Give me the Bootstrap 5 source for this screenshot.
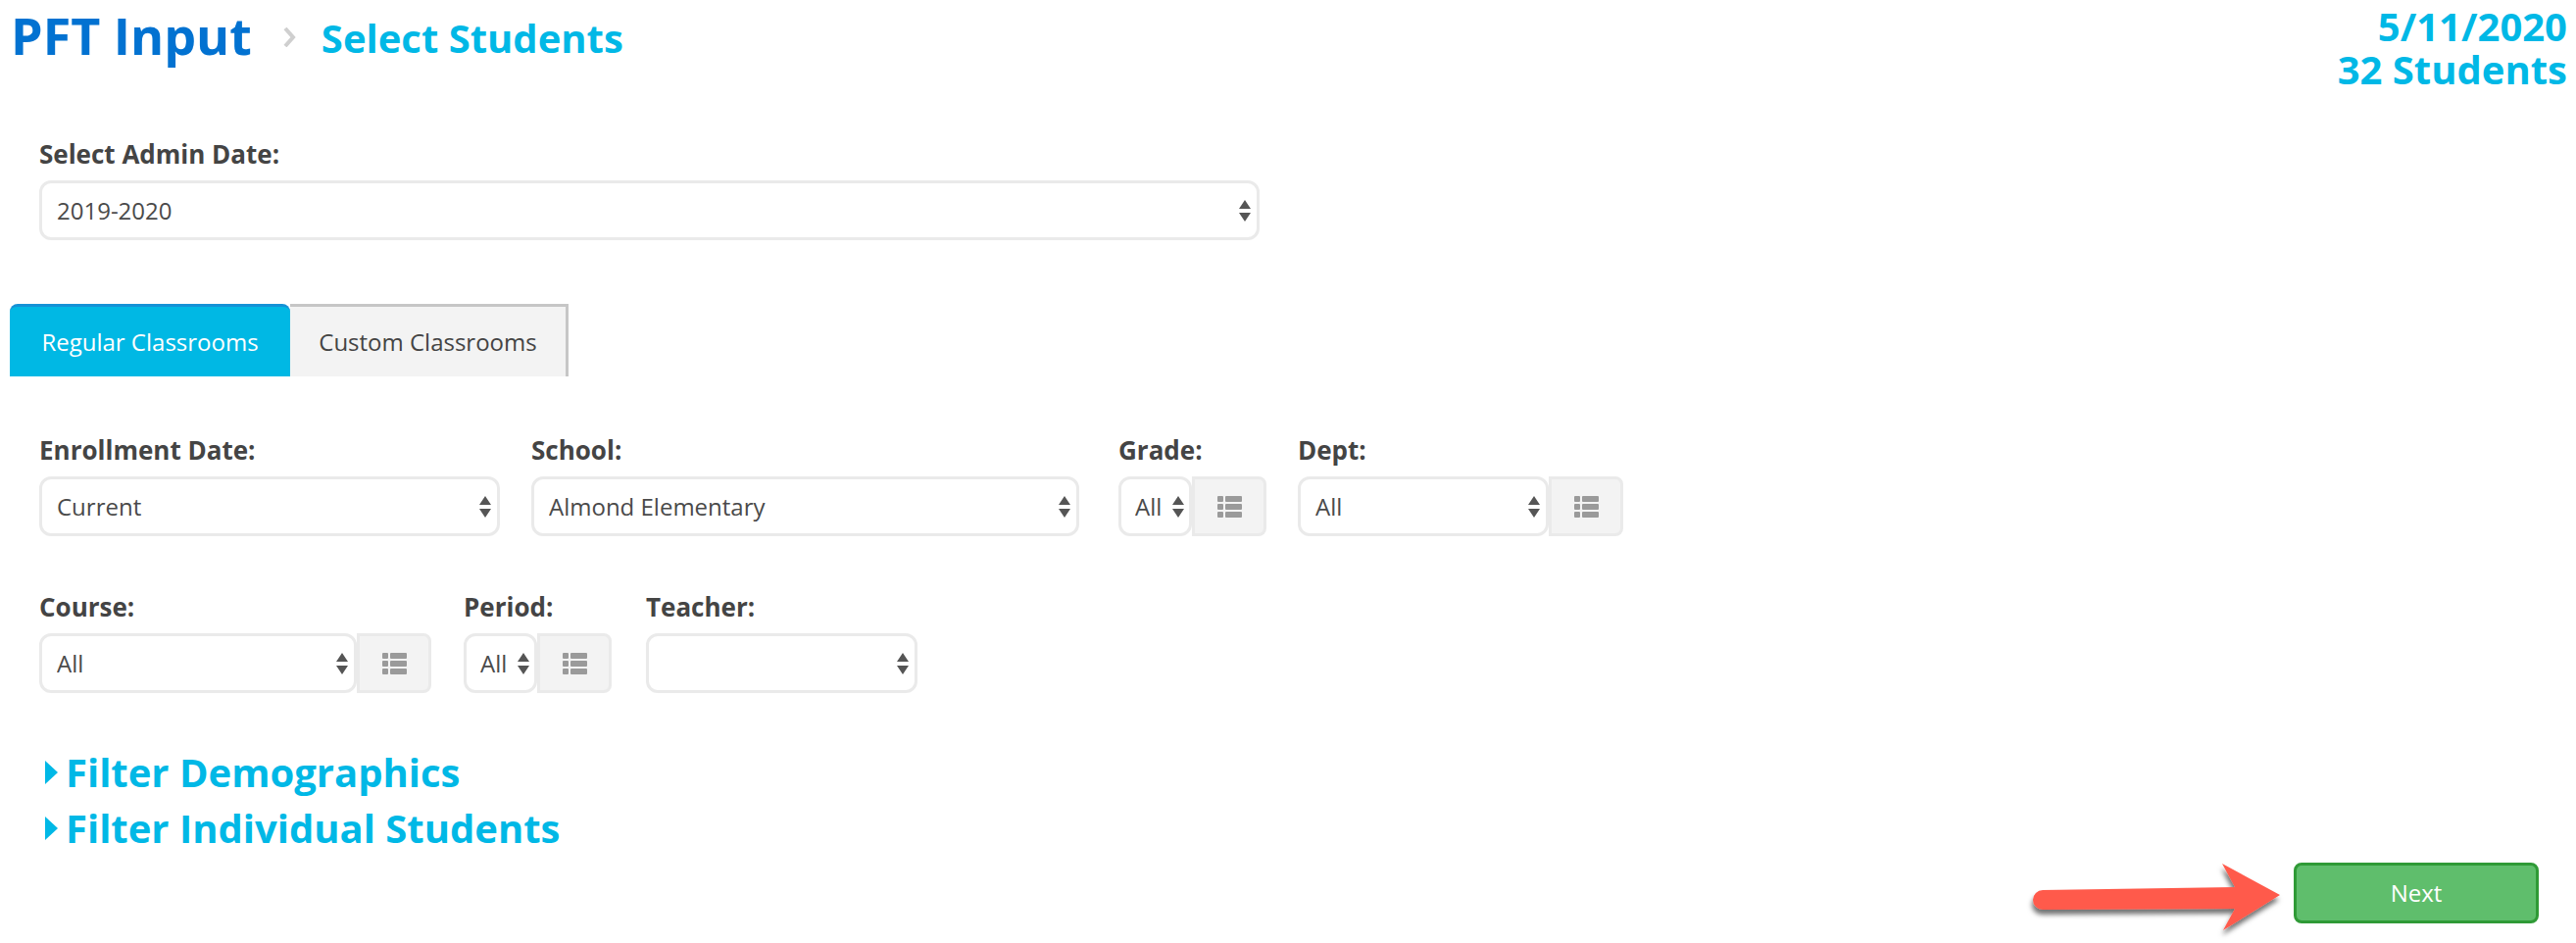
<!DOCTYPE html>
<html lang="en">
<head>
<meta charset="utf-8">
<title>PFT Input</title>
<link rel="stylesheet" href="https://cdn.jsdelivr.net/npm/bootstrap@5.3.0/dist/css/bootstrap.min.css">
<style>
html,body{height:100%}
body{font-family:"Open Sans",sans-serif;color:#444;font-size:24px;background:#fff;overflow:hidden}
.page{position:relative;height:962px;padding:0 9px 0 10px}
.top-bar{height:88px}
.pft-title{font-size:52px;font-weight:700;color:#0272d1;line-height:72px;margin:0 0 0 1px}
.pft-sub{font-size:40px;font-weight:700;color:#00b8e6;line-height:52px;margin:0 0 0 25px;position:relative;top:3px}
.crumb{width:14px;height:20px;margin-left:32px;position:relative;top:2px}
.pft-right{font-size:40px;font-weight:700;color:#00b8e6;line-height:44px;margin-top:5px}
.lbl{font-weight:700;font-size:26px;color:#444;line-height:34px;margin-bottom:10px;display:block;white-space:nowrap}
.sel{height:61px;border:3px solid #eaeaea;border-radius:12px;font-size:24px;color:#4a4a4a;padding:0 34px 0 15px;box-shadow:none;
background-image:url("data:image/svg+xml,%3Csvg xmlns='http://www.w3.org/2000/svg' width='12' height='22' viewBox='0 0 12 22'%3E%3Cpath fill='%23555' d='M6 0l6 9H0zM6 22L0 13h12z'/%3E%3C/svg%3E");
background-size:12px 22px;background-position:right 6px center;background-repeat:no-repeat;font-family:inherit}
.sel:focus{border-color:#eaeaea;box-shadow:none}
.admin-block{margin:52px 0 0 30px;width:1245px}
.tabs-row{margin-top:65px;height:74px}
.tab-btn{height:74px;font-size:24px;display:flex;align-items:center;justify-content:center}
.tab-on{width:286px;background:#00b8e4;color:#fff;border-top:3px solid #1592d6;border-radius:8px 8px 0 0}
.tab-off{width:284px;background:#f3f3f3;color:#444;border:3px solid #c6c6c6;border-bottom:0;border-left:0}
.filter-row{display:flex;margin-left:30px}
.row-a{margin-top:58px}
.row-b{margin-top:55px}
.fld{flex:none}
.addon{width:76px;height:61px;background:#f3f3f3;border:3px solid #eaeaea;border-radius:0 8px 8px 0;padding:0;display:flex;align-items:center;justify-content:center}
.addon svg{width:25px;height:22px}
.w-enroll{width:470px}.w-school{width:559px}
.w-grade{width:75px}.w-dept{width:256px}.w-course{width:324px}.w-period{width:75px}.w-teacher{width:277px}
.w-grade.sel,.w-period.sel{padding:0 20px 0 14px;background-position:right 5px center}
.filter-link{display:flex;align-items:center;color:#00b8e6;font-size:40px;font-weight:700;line-height:57px;text-decoration:none;margin-left:36px}
.filter-link svg{width:13px;height:24px;margin-right:8px;flex:none}
.links{margin-top:52px}
.next-wrap{position:absolute;right:38px;top:880px}
.next-btn{width:250px;height:62px;background:#5fbe6c;border:3px solid #2f9a36;color:#fff;font-size:24px;border-radius:8px;display:flex;align-items:center;justify-content:center;padding:0}
.next-btn:hover{background:#5fbe6c;border-color:#2f9a36;color:#fff}
.callout{position:absolute;left:2064px;top:870px;width:280px;height:92px;overflow:visible}
.gap-school{margin-left:32px}.gap-grade{margin-left:40px}.gap-dept{margin-left:32px}
.gap-period{margin-left:33px}.gap-teacher{margin-left:35px}
</style>
</head>
<body>
<div class="page">
  <div class="top-bar d-flex justify-content-between align-items-start">
    <div class="d-flex align-items-center">
      <h1 class="pft-title">PFT Input</h1>
      <svg class="crumb" viewBox="0 0 14 20"><path d="M2 1l8 9-8 9" fill="none" stroke="#cfcfcf" stroke-width="4"/></svg>
      <h2 class="pft-sub">Select Students</h2>
    </div>
    <div class="pft-right text-end">5/11/2020<br>32 Students</div>
  </div>

  <div class="admin-block">
    <label class="lbl">Select Admin Date:</label>
    <select class="form-select sel"><option>2019-2020</option></select>
  </div>

  <div class="tabs-row d-flex">
    <div class="tab-btn tab-on">Regular Classrooms</div>
    <div class="tab-btn tab-off">Custom Classrooms</div>
  </div>

  <div class="filter-row row-a">
    <div class="fld w-enroll"><label class="lbl">Enrollment Date:</label><select class="form-select sel"><option>Current</option></select></div>
    <div class="fld w-school gap-school"><label class="lbl">School:</label><select class="form-select sel"><option>Almond Elementary</option></select></div>
    <div class="fld gap-grade"><label class="lbl">Grade:</label><div class="d-flex"><select class="form-select sel w-grade"><option>All</option></select><button class="addon" type="button" aria-label="List"><svg viewBox="0 0 25 22"><g fill="#9a9a9a"><rect x="0" y="0" width="6" height="6" rx="1"/><rect x="8" y="0" width="17" height="6" rx="1"/><rect x="0" y="8" width="6" height="6" rx="1"/><rect x="8" y="8" width="17" height="6" rx="1"/><rect x="0" y="16" width="6" height="6" rx="1"/><rect x="8" y="16" width="17" height="6" rx="1"/></g></svg></button></div></div>
    <div class="fld gap-dept"><label class="lbl">Dept:</label><div class="d-flex"><select class="form-select sel w-dept"><option>All</option></select><button class="addon" type="button" aria-label="List"><svg viewBox="0 0 25 22"><g fill="#9a9a9a"><rect x="0" y="0" width="6" height="6" rx="1"/><rect x="8" y="0" width="17" height="6" rx="1"/><rect x="0" y="8" width="6" height="6" rx="1"/><rect x="8" y="8" width="17" height="6" rx="1"/><rect x="0" y="16" width="6" height="6" rx="1"/><rect x="8" y="16" width="17" height="6" rx="1"/></g></svg></button></div></div>
  </div>

  <div class="filter-row row-b">
    <div class="fld"><label class="lbl">Course:</label><div class="d-flex"><select class="form-select sel w-course"><option>All</option></select><button class="addon" type="button" aria-label="List"><svg viewBox="0 0 25 22"><g fill="#9a9a9a"><rect x="0" y="0" width="6" height="6" rx="1"/><rect x="8" y="0" width="17" height="6" rx="1"/><rect x="0" y="8" width="6" height="6" rx="1"/><rect x="8" y="8" width="17" height="6" rx="1"/><rect x="0" y="16" width="6" height="6" rx="1"/><rect x="8" y="16" width="17" height="6" rx="1"/></g></svg></button></div></div>
    <div class="fld gap-period"><label class="lbl">Period:</label><div class="d-flex"><select class="form-select sel w-period"><option>All</option></select><button class="addon" type="button" aria-label="List"><svg viewBox="0 0 25 22"><g fill="#9a9a9a"><rect x="0" y="0" width="6" height="6" rx="1"/><rect x="8" y="0" width="17" height="6" rx="1"/><rect x="0" y="8" width="6" height="6" rx="1"/><rect x="8" y="8" width="17" height="6" rx="1"/><rect x="0" y="16" width="6" height="6" rx="1"/><rect x="8" y="16" width="17" height="6" rx="1"/></g></svg></button></div></div>
    <div class="fld gap-teacher w-teacher"><label class="lbl">Teacher:</label><select class="form-select sel"><option></option></select></div>
  </div>

  <div class="links">
    <a class="filter-link" href="#"><svg viewBox="0 0 13 24"><path fill="#00b8e6" d="M0 0l13 12L0 24z"/></svg>Filter Demographics</a>
    <a class="filter-link" href="#"><svg viewBox="0 0 13 24"><path fill="#00b8e6" d="M0 0l13 12L0 24z"/></svg>Filter Individual Students</a>
  </div>

  <div class="next-wrap"><button class="btn next-btn" type="button">Next</button></div>
  <svg class="callout" viewBox="0 0 280 92">
    <defs><filter id="sh" x="-10%" y="-30%" width="125%" height="170%"><feDropShadow dx="-1" dy="5" stdDeviation="2.5" flood-color="#000" flood-opacity=".55"/></filter></defs>
    <path filter="url(#sh)" fill="#ff5a4c" d="M20 38 L216 35 L203 11 L262 43 L204 79 L216 57 L20 58 A10 10 0 0 1 20 38Z"/>
  </svg>
</div>
<script src="https://cdn.jsdelivr.net/npm/bootstrap@5.3.0/dist/js/bootstrap.bundle.min.js"></script>
</body>
</html>
